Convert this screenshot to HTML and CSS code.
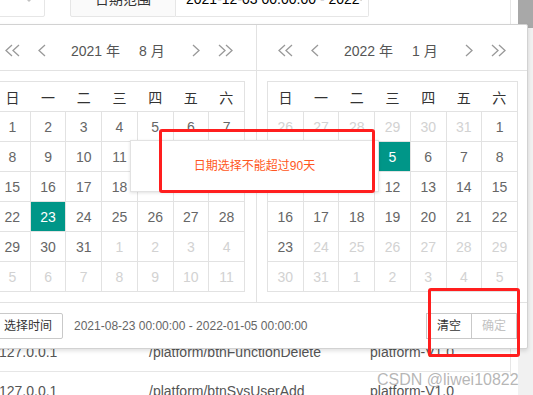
FILE: index.html
```html
<!DOCTYPE html>
<html lang="zh-CN">

<head>
    <meta charset="UTF-8">
    <meta name="viewport" content="width=device-width, initial-scale=1.0">
    <title>操作日志</title>
    <link rel="stylesheet" href="styles.css">
</head>

<body>
    <div class="page">
        <div class="form-row">
            <div class="select"><i class="caret"></i></div>
            <div class="field">
                <label class="field-label">日期范围</label>
                <div class="field-input"><span class="field-text">2021-12-03 00:00:00 - 2022-01-05 00:00:00</span></div>
            </div>
        </div>
        <div class="log-table">
            <div class="log-row log-head"><span>IP地址</span><span>请求地址</span><span>服务</span></div>
            <div class="log-row"><span>127.0.0.1</span><span>/platform/btnLogin</span><span>platform-V1.0</span></div>
            <div class="log-row"><span>127.0.0.1</span><span>/platform/btnFunctionAdd</span><span>platform-V1.0</span></div>
            <div class="log-row"><span>127.0.0.1</span><span>/platform/btnFunctionEdit</span><span>platform-V1.0</span></div>
            <div class="log-row"><span>127.0.0.1</span><span>/platform/btnRoleAdd</span><span>platform-V1.0</span></div>
            <div class="log-row"><span>127.0.0.1</span><span>/platform/btnRoleEdit</span><span>platform-V1.0</span></div>
            <div class="log-row"><span>127.0.0.1</span><span>/platform/btnMenuAdd</span><span>platform-V1.0</span></div>
            <div class="log-row"><span>127.0.0.1</span><span>/platform/btnMenuEdit</span><span>platform-V1.0</span></div>
            <div class="log-row"><span>127.0.0.1</span><span>/platform/btnFunctionDelete</span><span>platform-V1.0</span></div>
            <div class="log-row"><span>127.0.0.1</span><span>/platform/btnSysUserAdd</span><span>platform-V1.0</span></div>
        </div>
    </div>

    <div class="scrollbar"><div class="thumb"></div></div>

    <div class="laydate">
        <div class="laydate-body">
            <div class="laydate-main main-left">
                <div class="laydate-header">
                    <svg class="ico ico-dbl" viewBox="0 0 17 13"><path d="M8 1L2 6.5L8 12M15 1L9 6.5L15 12"/></svg>
                    <svg class="ico ico-one prev" viewBox="0 0 9 13"><path d="M8 1L2 6.5L8 12"/></svg>
                    <span class="ym year">2021 年</span>
                    <span class="ym month">8 月</span>
                    <svg class="ico ico-one next" viewBox="0 0 9 13"><path d="M1 1L7 6.5L1 12"/></svg>
                    <svg class="ico ico-dbl last" viewBox="0 0 17 13"><path d="M2 1L8 6.5L2 12M9 1L15 6.5L9 12"/></svg>
                </div>
                <div class="laydate-content">
                    <table>
                        <thead>
                            <tr><th>日</th><th>一</th><th>二</th><th>三</th><th>四</th><th>五</th><th>六</th></tr>
                        </thead>
                        <tbody>
                            <tr><td>1</td><td>2</td><td>3</td><td>4</td><td>5</td><td>6</td><td>7</td></tr>
                            <tr><td>8</td><td>9</td><td>10</td><td>11</td><td>12</td><td>13</td><td>14</td></tr>
                            <tr><td>15</td><td>16</td><td>17</td><td>18</td><td>19</td><td>20</td><td>21</td></tr>
                            <tr><td>22</td><td class="on">23</td><td>24</td><td>25</td><td>26</td><td>27</td><td>28</td></tr>
                            <tr><td>29</td><td>30</td><td>31</td><td class="off">1</td><td class="off">2</td><td class="off">3</td><td class="off">4</td></tr>
                            <tr><td class="off">5</td><td class="off">6</td><td class="off">7</td><td class="off">8</td><td class="off">9</td><td class="off">10</td><td class="off">11</td></tr>
                        </tbody>
                    </table>
                </div>
            </div>
            <div class="laydate-main main-right">
                <div class="laydate-header">
                    <svg class="ico ico-dbl" viewBox="0 0 17 13"><path d="M8 1L2 6.5L8 12M15 1L9 6.5L15 12"/></svg>
                    <svg class="ico ico-one prev" viewBox="0 0 9 13"><path d="M8 1L2 6.5L8 12"/></svg>
                    <span class="ym year">2022 年</span>
                    <span class="ym month">1 月</span>
                    <svg class="ico ico-one next" viewBox="0 0 9 13"><path d="M1 1L7 6.5L1 12"/></svg>
                    <svg class="ico ico-dbl last" viewBox="0 0 17 13"><path d="M2 1L8 6.5L2 12M9 1L15 6.5L9 12"/></svg>
                </div>
                <div class="laydate-content">
                    <table>
                        <thead>
                            <tr><th>日</th><th>一</th><th>二</th><th>三</th><th>四</th><th>五</th><th>六</th></tr>
                        </thead>
                        <tbody>
                            <tr><td class="off">26</td><td class="off">27</td><td class="off">28</td><td class="off">29</td><td class="off">30</td><td class="off">31</td><td>1</td></tr>
                            <tr><td>2</td><td>3</td><td>4</td><td class="on">5</td><td>6</td><td>7</td><td>8</td></tr>
                            <tr><td>9</td><td>10</td><td>11</td><td>12</td><td>13</td><td>14</td><td>15</td></tr>
                            <tr><td>16</td><td>17</td><td>18</td><td>19</td><td>20</td><td>21</td><td>22</td></tr>
                            <tr><td>23</td><td class="off">24</td><td class="off">25</td><td class="off">26</td><td class="off">27</td><td class="off">28</td><td class="off">29</td></tr>
                            <tr><td class="off">30</td><td class="off">31</td><td class="off">1</td><td class="off">2</td><td class="off">3</td><td class="off">4</td><td class="off">5</td></tr>
                        </tbody>
                    </table>
                </div>
            </div>
        </div>
        <div class="laydate-footer">
            <span class="btn">选择时间</span>
            <span class="preview">2021-08-23 00:00:00 - 2022-01-05 00:00:00</span>
            <div class="footer-btns">
                <span class="btn">清空</span>
                <span class="btn disabled">确定</span>
            </div>
        </div>
        <div class="laydate-hint">日期选择不能超过90天</div>
    </div>

    <div class="mark mark-hint"></div>
    <div class="mark mark-btns"></div>
    <div class="watermark">CSDN @liwei10822</div>
</body>

</html>
```

FILE: styles.css
```css
* {
    margin: 0;
    padding: 0;
    box-sizing: border-box;
}

html,
body {
    width: 100%;
    height: 100%;
    background-color: #ffffff;
}

body {
    position: relative;
    overflow: hidden;
    font-family: "Liberation Sans", "Noto Sans CJK SC", sans-serif;
    font-size: 14px;
    color: #666;
}

/* background page */
.page {
    width: 527px;
    margin-left: -16px;
    border-right: 1px solid #e6e6e6;
    height: 100%;
}

.form-row {
    display: flex;
    margin-top: -19px;
    height: 36px;
}

.select {
    position: relative;
    width: 61px;
    height: 36px;
    border: 1px solid #e6e6e6;
    border-radius: 2px;
}

.caret {
    position: absolute;
    right: 9px;
    top: 50%;
    margin-top: -3px;
    border-width: 6px;
    border-style: solid;
    border-color: #c2c2c2 transparent transparent transparent;
}

.field {
    display: flex;
    margin-left: 25px;
}

.field-label {
    width: 106px;
    height: 36px;
    line-height: 34px;
    text-align: center;
    color: #333;
    background-color: #fafafa;
    border: 1px solid #e6e6e6;
    border-radius: 2px 0 0 2px;
}

.field-input {
    width: 193px;
    height: 36px;
    line-height: 34px;
    padding: 0 6px 0 10px;
    color: #000;
    border: 1px solid #e6e6e6;
    border-left: none;
    border-radius: 0 2px 2px 0;
}

.field-text {
    display: block;
    white-space: nowrap;
    overflow: hidden;
}

.log-table {
    margin-top: 4px;
}

.log-row {
    display: grid;
    grid-template-columns: 150px 221px 1fr;
    height: 39px;
    line-height: 38px;
    border-bottom: 1px solid #e6e6e6;
    color: #555;
    white-space: nowrap;
}

.log-row span {
    padding: 0 15px;
}

/* scrollbar */
.scrollbar {
    position: absolute;
    right: 0;
    top: 0;
    width: 15px;
    height: 100%;
    background-color: #f1f1f1;
}

.thumb {
    height: 28px;
    background-color: #a8a8a8;
}

/* laydate */
.laydate {
    position: absolute;
    left: -18px;
    top: 24px;
    width: 546px;
    background-color: #fff;
    border: 1px solid #d2d2d2;
    border-radius: 2px;
    box-shadow: 0 2px 4px rgba(0, 0, 0, .12);
}

.laydate-body {
    display: flex;
}

.main-left {
    width: 273px;
}

.main-right {
    flex: 1;
    border-left: 1px solid #e2e2e2;
}

.laydate-header {
    display: flex;
    align-items: center;
    height: 46px;
    padding-top: 10px;
    padding-bottom: 5px;
    border-bottom: 1px solid #e2e2e2;
    color: #555;
}

.main-left .laydate-header {
    padding-left: 21px;
}

.main-right .laydate-header {
    padding-left: 20px;
}

.ico {
    height: 13px;
    fill: none;
    stroke: #999;
    stroke-width: 1.3;
}

.ico-dbl {
    width: 17px;
}

.ico-one {
    width: 9px;
}

.prev {
    margin-left: 16px;
}

.year {
    margin-left: 25px;
}

.month {
    margin-left: 19px;
}

.next {
    margin-left: 27px;
}

.last {
    margin-left: 16px;
}

.laydate-content {
    padding: 10px 0;
}

.main-left table {
    margin-left: 11px;
}

.main-right table {
    margin-left: 10px;
}

table {
    width: 251px;
    table-layout: fixed;
    border-collapse: collapse;
    border: 1px solid #e2e2e2;
}

th,
td {
    height: 30px;
    padding: 0;
    text-align: center;
    font-weight: normal;
}

th {
    color: #333;
}

td {
    border: 1px solid #e2e2e2;
    color: #666;
}

td.off {
    color: #d2d2d2;
}

td.on {
    background-color: #009688;
    color: #fff;
}

.laydate-footer {
    display: flex;
    align-items: flex-start;
    height: 46px;
    padding: 10px 10px 0;
    border-top: 1px solid #e2e2e2;
    font-size: 12px;
}

.btn {
    display: inline-block;
    height: 26px;
    line-height: 24px;
    padding: 0 10px;
    border: 1px solid #c9c9c9;
    border-radius: 2px;
    background-color: #fff;
    color: #333;
    white-space: nowrap;
}

.preview {
    line-height: 26px;
    margin-left: 11px;
    color: #666;
}

.footer-btns {
    display: flex;
    margin-left: auto;
}

.footer-btns .btn {
    border-radius: 0;
}

.footer-btns .btn + .btn {
    margin-left: -1px;
}

.btn.disabled {
    color: #c2c2c2;
}

.laydate-hint {
    position: absolute;
    left: 147px;
    top: 115px;
    width: 249px;
    padding: 15px;
    line-height: 20px;
    text-align: center;
    font-size: 12px;
    color: #ff5722;
    background-color: #fff;
    border: 1px solid #e2e2e2;
    box-shadow: 0 1px 3px rgba(0, 0, 0, .12);
}

/* annotation boxes */
.mark {
    position: absolute;
    border: 3px solid #ff1e1e;
    border-radius: 3px;
}

.mark-hint {
    left: 159px;
    top: 129px;
    width: 216px;
    height: 64px;
}

.mark-btns {
    left: 428px;
    top: 288px;
    width: 92px;
    height: 69px;
}

.watermark {
    position: absolute;
    left: 377px;
    top: 370px;
    font-size: 16px;
    line-height: 20px;
    color: rgba(150, 150, 150, .7);
    white-space: nowrap;
}
```
